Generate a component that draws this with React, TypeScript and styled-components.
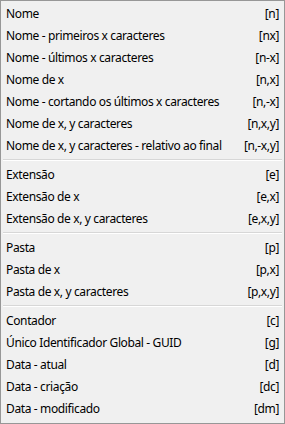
import React from "react";
import styled, { createGlobalStyle } from "styled-components";

const Global = createGlobalStyle`
  html, body { margin: 0; padding: 0; background: #f0f0f0; }
  body { font-family: "Noto Sans", "Segoe UI", sans-serif; }
`;

const Menu = styled.div`
  box-sizing: border-box;
  width: 285px;
  height: 424px;
  background: #f0f0f0;
  border: 1px solid #979797;
  padding: 1px 2px 4px 2px;
  display: flex;
  flex-direction: column;
`;

const Item = styled.div`
  height: 22px;
  display: flex;
  align-items: center;
  justify-content: space-between;
  padding: 0 3px 0 3px;
  font-size: 12px;
  letter-spacing: -0.37px;
  color: #000;
  white-space: nowrap;
`;

const Label = styled.span``;
const Shortcut = styled.span``;

const Separator = styled.div`
  height: 7px;
  display: flex;
  align-items: center;
  &::before {
    content: "";
    flex: 1;
    height: 1px;
    background: #d7d7d7;
    border-bottom: 1px solid #ffffff;
  }
`;

type Entry = [string, string] | null;

const entries: Entry[] = [
  ["Nome", "[n]"],
  ["Nome - primeiros x caracteres", "[nx]"],
  ["Nome - últimos x caracteres", "[n-x]"],
  ["Nome de x", "[n,x]"],
  ["Nome - cortando os últimos x caracteres", "[n,-x]"],
  ["Nome de x, y caracteres", "[n,x,y]"],
  ["Nome de x, y caracteres - relativo ao final", "[n,-x,y]"],
  null,
  ["Extensão", "[e]"],
  ["Extensão de x", "[e,x]"],
  ["Extensão de x, y caracteres", "[e,x,y]"],
  null,
  ["Pasta", "[p]"],
  ["Pasta de x", "[p,x]"],
  ["Pasta de x, y caracteres", "[p,x,y]"],
  null,
  ["Contador", "[c]"],
  ["Único Identificador Global - GUID", "[g]"],
  ["Data - atual", "[d]"],
  ["Data - criação", "[dc]"],
  ["Data - modificado", "[dm]"],
];

export default function App() {
  return (
    <>
      <Global />
      <Menu>
        {entries.map((e, i) =>
          e === null ? (
            <Separator key={i} />
          ) : (
            <Item key={i}>
              <Label>{e[0]}</Label>
              <Shortcut>{e[1]}</Shortcut>
            </Item>
          )
        )}
      </Menu>
    </>
  );
}
